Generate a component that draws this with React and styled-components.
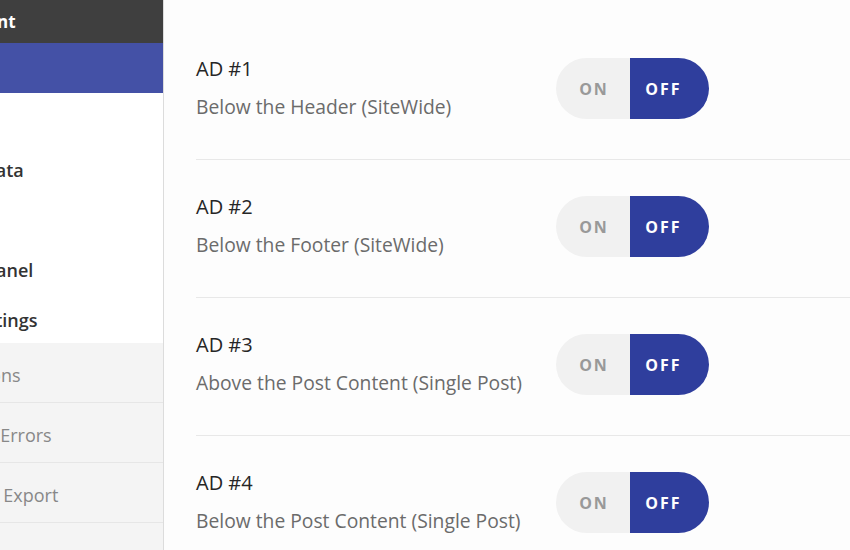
import React from 'react';
import styled, { createGlobalStyle } from 'styled-components';

const GlobalStyle = createGlobalStyle`
  html, body {
    margin: 0;
    padding: 0;
    background: #fdfdfd;
  }
  body {
    font-family: "Open Sans", "Noto Sans", sans-serif;
    overflow: hidden;
  }
`;

const Page = styled.div`
  display: flex;
  width: 850px;
  height: 550px;
  overflow: hidden;
`;

// the settings sidebar is wider than the window, only its right edge shows
const Sidebar = styled.nav`
  flex: 0 0 163px;
  border-right: 1px solid #dcdcdc;
  background: #f4f4f4;
  overflow: hidden;
`;

const SideInner = styled.div`
  width: 303px;
  margin-left: -140px;
`;

const SideHead = styled.div`
  height: 43px;
  display: flex;
  align-items: center;
  padding-left: 16px;
  background: #3f3f3f;
  color: #fff;
  font-weight: 700;
  font-size: 17px;
  white-space: nowrap;
`;

const SideActive = styled.div`
  height: 50px;
  background: #4451a6;
`;

const SideGroup = styled.div`
  background: #fff;
`;

const SideItem = styled.div`
  height: 50px;
  box-sizing: border-box;
  padding: 3px 0 0 80px;
  display: flex;
  align-items: center;
  font-size: 18px;
  font-weight: 600;
  color: #333;
  white-space: nowrap;
`;

const SideLink = styled.div`
  height: 60px;
  box-sizing: border-box;
  padding: 4px 0 0 70px;
  display: flex;
  align-items: center;
  font-size: 18px;
  color: #888;
  border-bottom: 1px solid #e6e6e6;
  white-space: nowrap;
`;

const Main = styled.main`
  flex: 1;
  padding: 22px 0 0 32px;
  background: #fdfdfd;
`;

const Row = styled.div`
  display: flex;
  align-items: center;
  padding: 36px 0 40px;
  border-bottom: 1px solid #e8e8e8;
`;

const Info = styled.div`
  width: 360px;
  margin: -1px 0;
`;

const Title = styled.div`
  font-size: 20px;
  color: #262626;
  line-height: 24px;
`;

const Subtitle = styled.div`
  font-size: 19.3px;
  color: #6b6b6b;
  margin-top: 13px;
  line-height: 26px;
  white-space: nowrap;
`;

const Switch = styled.div`
  display: flex;
  height: 61px;
  border-radius: 31px;
  overflow: hidden;
`;

const Half = styled.div`
  width: ${p => (p.$on ? 74 : 79)}px;
  display: flex;
  align-items: center;
  justify-content: center;
  font-size: 16px;
  font-weight: 700;
  letter-spacing: 2px;
  padding: ${p => (p.$on ? '0 0 0 2px' : '0 12px 0 0')};
  background: ${p => (p.$active ? '#2f3e9d' : '#f1f1f1')};
  color: ${p => (p.$active ? '#fff' : '#999')};
  box-sizing: border-box;
`;

const ads = [
  { n: 1, where: 'Below the Header (SiteWide)' },
  { n: 2, where: 'Below the Footer (SiteWide)' },
  { n: 3, where: 'Above the Post Content (Single Post)' },
  { n: 4, where: 'Below the Post Content (Single Post)' },
];

export default function App() {
  return (
    <Page>
      <GlobalStyle />
      <Sidebar>
        <SideInner>
          <SideHead>Ad Management</SideHead>
          <SideActive />
          <SideGroup>
            <SideItem>Home</SideItem>
            <SideItem>Post Data</SideItem>
            <SideItem>Layout</SideItem>
            <SideItem>User Panel</SideItem>
            <SideItem>Ad Settings</SideItem>
          </SideGroup>
          <SideLink>Extensions</SideLink>
          <SideLink>Log 404 Errors</SideLink>
          <SideLink>Import / Export</SideLink>
        </SideInner>
      </Sidebar>
      <Main>
        {ads.map(ad => (
          <Row key={ad.n}>
            <Info>
              <Title>AD #{ad.n}</Title>
              <Subtitle>{ad.where}</Subtitle>
            </Info>
            <Switch>
              <Half $on>ON</Half>
              <Half $active>OFF</Half>
            </Switch>
          </Row>
        ))}
      </Main>
    </Page>
  );
}
